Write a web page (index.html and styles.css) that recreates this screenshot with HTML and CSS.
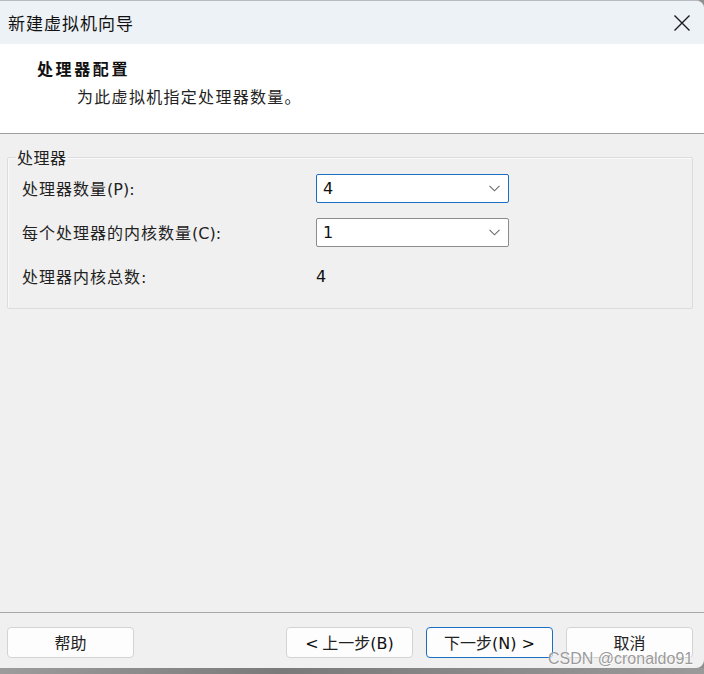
FILE: index.html
```html
<!DOCTYPE html>
<html lang="zh-CN">
<head>
<meta charset="utf-8">
<title>新建虚拟机向导</title>
<link rel="stylesheet" href="styles.css">
</head>
<body>
<div class="window">
  <div class="titlebar">
    <span class="title">新建虚拟机向导</span>
    <span class="close">
      <svg width="18" height="18" viewBox="0 0 18 18"><path d="M1.5 1.5 L16.5 16.5 M16.5 1.5 L1.5 16.5" stroke="#1b1b1b" stroke-width="1.4" fill="none"/></svg>
    </span>
  </div>
  <div class="header">
    <div class="h-title">处理器配置</div>
    <div class="h-sub">为此虚拟机指定处理器数量。</div>
  </div>
  <div class="content">
    <fieldset class="group">
      <legend>处理器</legend>
      <div class="row">
        <span class="label">处理器数量<span class="lat">(P):</span></span>
        <div class="combo focused"><span class="val">4</span>
          <svg class="chev" width="11" height="7" viewBox="0 0 11 7"><path d="M0.5 0.8 L5.5 5.8 L10.5 0.8" stroke="#6a6a6a" stroke-width="1.1" fill="none"/></svg>
        </div>
      </div>
      <div class="row">
        <span class="label">每个处理器的内核数量<span class="lat">(C):</span></span>
        <div class="combo"><span class="val">1</span>
          <svg class="chev" width="11" height="7" viewBox="0 0 11 7"><path d="M0.5 0.8 L5.5 5.8 L10.5 0.8" stroke="#6a6a6a" stroke-width="1.1" fill="none"/></svg>
        </div>
      </div>
      <div class="row">
        <span class="label">处理器内核总数<span class="lat">:</span></span>
        <span class="total">4</span>
      </div>
    </fieldset>
  </div>
  <div class="footer">
    <button class="btn">帮助</button>
    <div class="spacer"></div>
    <button class="btn"><span class="lat">&lt;</span> 上一步<span class="lat">(B)</span></button>
    <button class="btn primary">下一步<span class="lat">(N) &gt;</span></button>
    <button class="btn">取消</button>
  </div>
  <div class="watermark">CSDN @cronaldo91</div>
</div>
<div class="underlay"></div>
</body>
</html>
```
FILE: styles.css
```css
html, body {
  margin: 0;
  padding: 0;
}
body {
  width: 704px;
  height: 674px;
  overflow: hidden;
  background: #8f8f8f;
  font-family: "Noto Sans CJK SC", sans-serif;
  color: #1a1a1a;
}
.window {
  position: relative;
  height: 668px;
  display: flex;
  flex-direction: column;
  background: #f0f0f0;
  border-top: 1px solid #b8bcc2;
  border-radius: 0 8px 8px 0;
  box-sizing: border-box;
  overflow: hidden;
}
.titlebar {
  height: 43px;
  background: #edf2f7;
  display: flex;
  align-items: center;
  justify-content: space-between;
  padding: 0 13px 0 8px;
  flex-shrink: 0;
}
.title {
  font-size: 17px;
  letter-spacing: 1px;
  color: #111;
}
.close {
  display: flex;
  align-items: center;
}
.header {
  height: 90px;
  background: #ffffff;
  border-bottom: 1px solid #a0a0a0;
  flex-shrink: 0;
  box-sizing: border-box;
  padding: 13px 0 0 37px;
}
.h-title {
  font-size: 16px;
  font-weight: bold;
  letter-spacing: 2.6px;
  line-height: 22px;
  color: #111;
}
.h-sub {
  font-size: 16px;
  letter-spacing: 1.3px;
  line-height: 22px;
  margin-top: 6px;
  padding-left: 40px;
  color: #222;
}
.content {
  flex: 1;
  padding: 14px 11px 0 7px;
}
.group {
  margin: 0;
  padding: 0 0 10px 14px;
  border: 1px solid #dcdcdc;
  box-shadow: inset 1px 1px 0 #fafafa;
  border-radius: 2px;
}
.group legend {
  font-size: 16px;
  line-height: 18px;
  letter-spacing: 0.5px;
  padding: 0 1px;
  margin-left: -6px;
  color: #222;
}
.row {
  height: 44px;
  display: flex;
  align-items: center;
}
.label {
  width: 294px;
  font-size: 16px;
  letter-spacing: 1px;
  color: #222;
}
.lat {
  font-family: "DejaVu Sans", sans-serif;
  letter-spacing: 0;
}
.combo {
  width: 193px;
  height: 29px;
  box-sizing: border-box;
  border: 1px solid #8c8c8c;
  border-radius: 2px;
  background: #fff;
  display: flex;
  align-items: center;
  justify-content: space-between;
  padding: 0 8px 0 6px;
}
.combo.focused {
  border-color: #1a6fc4;
}
.val, .total {
  font-family: "DejaVu Sans", sans-serif;
  font-size: 16px;
  color: #111;
}
.footer {
  height: 56px;
  box-sizing: border-box;
  border-top: 1px solid #a8a8a8;
  display: flex;
  align-items: flex-start;
  padding: 14px 11px 0 7px;
  gap: 13px;
  flex-shrink: 0;
}
.spacer {
  flex: 1;
}
.btn {
  display: block;
  width: 127px;
  height: 31px;
  box-sizing: border-box;
  background: #fdfdfd;
  border: 1px solid #d3d3d3;
  border-radius: 4px;
  font-family: "Noto Sans CJK SC", sans-serif;
  font-size: 16px;
  line-height: 27px;
  text-align: center;
  color: #222;
  padding: 0;
  white-space: pre;
}
.btn.primary {
  border-color: #1a6fc4;
}
.btn .lat {
  font-size: 16px;
  color: #111;
}
.watermark {
  position: absolute;
  left: 548px;
  top: 649px;
  font-family: "Liberation Sans", sans-serif;
  font-size: 16px;
  color: rgba(120, 120, 120, 0.75);
  text-shadow: 0 0 1px #fff, 1px 1px 0 rgba(255,255,255,0.6);
  white-space: nowrap;
}
.underlay {
  height: 6px;
  background: linear-gradient(90deg, #9c9c9c, #7a7a7a 40%, #9a9a9a);
}
```
